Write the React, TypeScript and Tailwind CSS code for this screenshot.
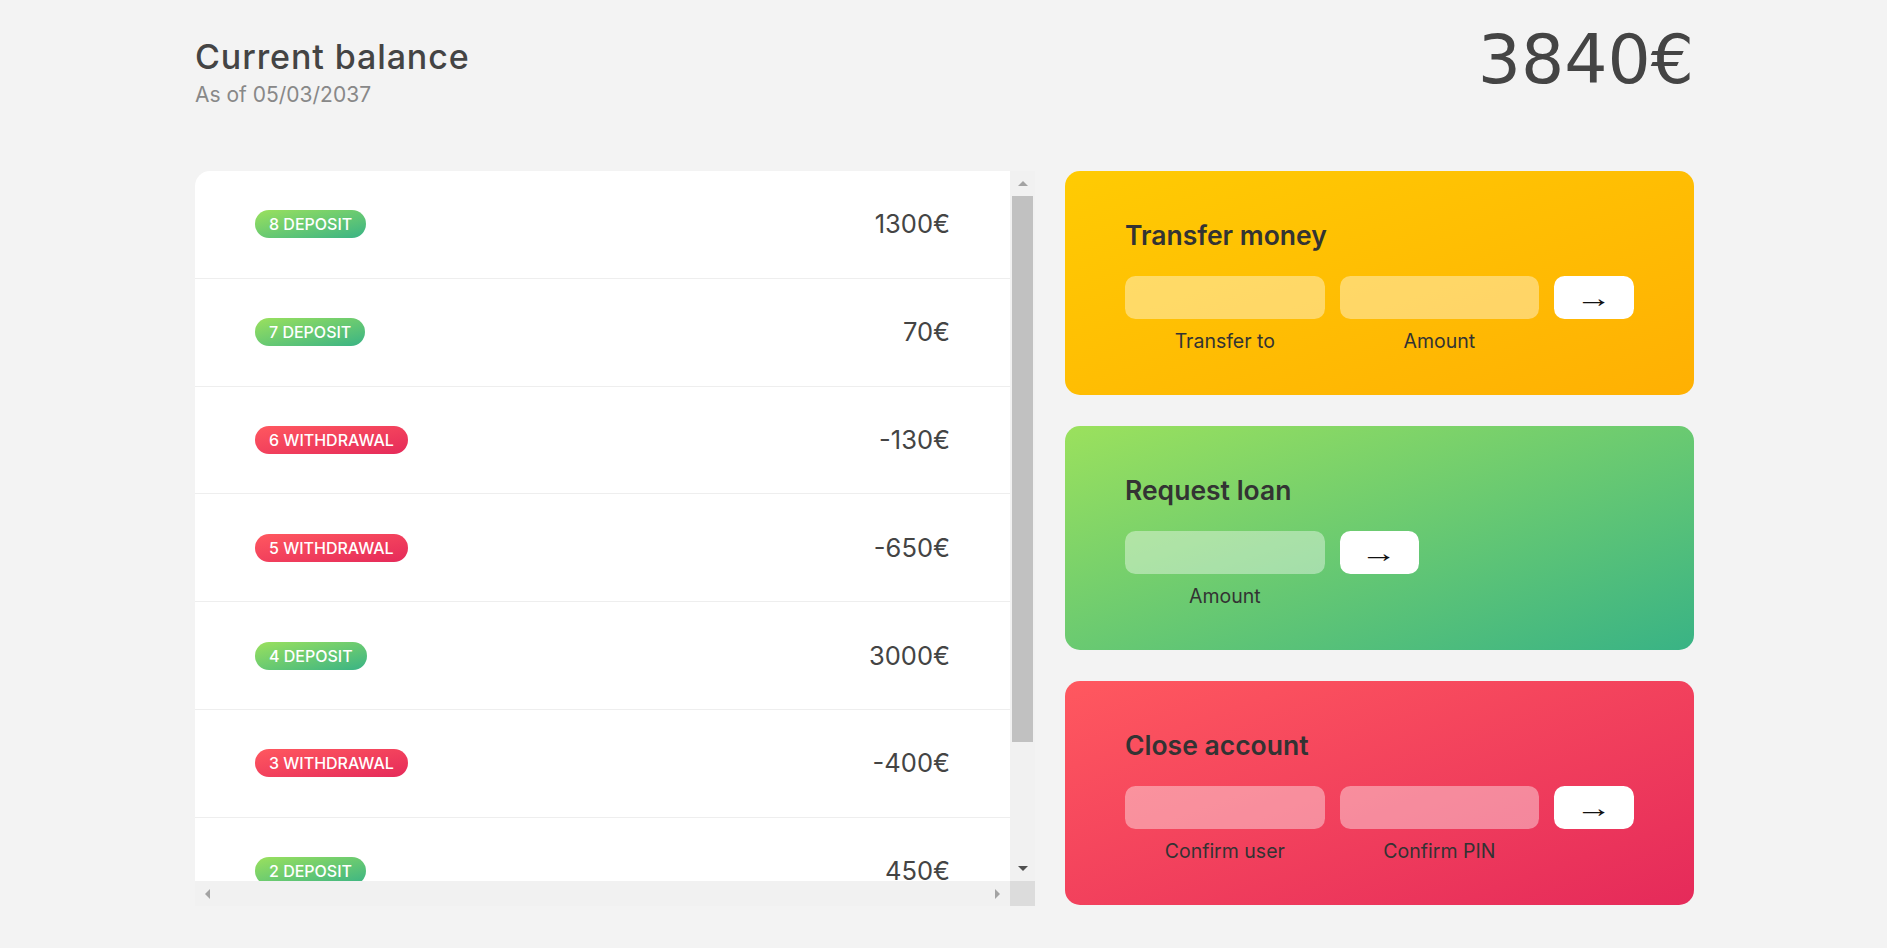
const movements = [
  { n: 8, type: "deposit", value: 1300 },
  { n: 7, type: "deposit", value: 70 },
  { n: 6, type: "withdrawal", value: -130 },
  { n: 5, type: "withdrawal", value: -650 },
  { n: 4, type: "deposit", value: 3000 },
  { n: 3, type: "withdrawal", value: -400 },
  { n: 2, type: "deposit", value: 450 },
  { n: 1, type: "deposit", value: 200 },
];

const Triangle = ({ dir, color }: { dir: "up" | "down" | "left" | "right"; color: string }) => {
  const points = {
    up: "0,5 5,0 10,5",
    down: "0,0 10,0 5,5",
    left: "5,0 5,10 0,5",
    right: "0,0 0,10 5,5",
  }[dir];
  const vertical = dir === "up" || dir === "down";
  return (
    <svg width={vertical ? 10 : 5} height={vertical ? 5 : 10} viewBox={vertical ? "0 0 10 5" : "0 0 5 10"}>
      <polygon points={points} fill={color} />
    </svg>
  );
};

const Operation = ({
  title,
  bg,
  inputs,
  loan,
}: {
  title: string;
  bg: string;
  inputs: string[];
  loan?: boolean;
}) => {
  const inputStyle = "h-[43px] w-full rounded-[10.5px] bg-white/40 border-none outline-none";
  const btnStyle =
    "h-[43px] w-full rounded-[10.5px] bg-white text-[26px] leading-none text-[#111] font-['Liberation_Sans',sans-serif] flex items-center justify-center";
  const labelStyle = "mt-[2px] text-center text-[19.5px] leading-[29px] text-[#333]";
  const arrow = <span className="inline-block scale-x-[1.4]">→</span>;

  return (
    <div className={`h-[224px] rounded-[15px] px-[60px] pt-[45px] ${bg}`}>
      <h2 className="text-[26.5px] leading-[38px] font-semibold text-[#333] mb-[22px]">{title}</h2>
      {loan ? (
        <div className="grid grid-cols-[2.5fr_1fr_2.5fr] gap-x-[15px] gap-y-[6px]">
          <input className={inputStyle} />
          <button className={btnStyle}>{arrow}</button>
          <div />
          <label className={labelStyle}>{inputs[0]}</label>
        </div>
      ) : (
        <div className="grid grid-cols-[2.5fr_2.5fr_1fr] gap-x-[15px] gap-y-[6px]">
          <input className={inputStyle} />
          <input className={inputStyle} />
          <button className={btnStyle}>{arrow}</button>
          <label className={labelStyle}>{inputs[0]}</label>
          <label className={labelStyle}>{inputs[1]}</label>
        </div>
      )}
    </div>
  );
};

export default function App() {
  return (
    <div className="min-h-screen bg-[#f3f3f3] text-[#444] font-[Inter,sans-serif]">
      <main className="ml-[195px] w-[1499px]">
        {/* balance */}
        <div className="flex justify-between items-start h-[171px]">
          <div className="pt-[36px]">
            <p className="text-[34px] leading-[41px] font-medium tracking-[0.9px]">Current balance</p>
            <p className="mt-[6px] text-[21px] leading-[24px] text-[#888]">
              As of <span>05/03/2037</span>
            </p>
          </div>
          <p className="pt-[26px] font-['DejaVu_Sans',sans-serif] text-[68px] leading-none">
            3840€
          </p>
        </div>

        <div className="grid grid-cols-[840px_629px] gap-x-[30px]">
          {/* movements */}
          <div className="flex flex-col h-[735px]">
            <div className="flex flex-1 min-h-0">
              <div className="flex-1 bg-white rounded-tl-[15px] overflow-hidden">
                {movements.map((m) => (
                  <div
                    key={m.n}
                    className="h-[107.8px] shrink-0 flex items-center justify-between px-[60px] border-b border-[#eee]"
                  >
                    <span
                      className={`rounded-full px-[14px] py-[2px] text-[16px] leading-[24px] font-medium uppercase text-white ${
                        m.type === "deposit"
                          ? "bg-[linear-gradient(to_top_left,#39b385,#9be15d)]"
                          : "bg-[linear-gradient(to_top_left,#e52a5a,#ff585f)]"
                      }`}
                    >
                      {m.n} {m.type}
                    </span>
                    <span className="text-[25.5px] leading-[38px] text-[#444]">{m.value}€</span>
                  </div>
                ))}
              </div>
              <div className="w-[25px] bg-[#f1f1f1] flex flex-col items-center">
                <div className="h-[25px] flex items-center justify-center">
                  <Triangle dir="up" color="#a3a3a3" />
                </div>
                <div className="w-[21px] h-[546px] bg-[#c1c1c1]" />
                <div className="flex-1" />
                <div className="h-[25px] flex items-center justify-center">
                  <Triangle dir="down" color="#505050" />
                </div>
              </div>
            </div>
            <div className="flex h-[25px]">
              <div className="flex-1 bg-[#f1f1f1] flex items-center justify-between px-[10px]">
                <Triangle dir="left" color="#a3a3a3" />
                <Triangle dir="right" color="#a3a3a3" />
              </div>
              <div className="w-[25px] bg-[#dcdcdc]" />
            </div>
          </div>

          {/* operations */}
          <div className="flex flex-col gap-[31px]">
            <Operation
              title="Transfer money"
              bg="bg-[linear-gradient(to_top_left,#ffb003,#ffcb03)]"
              inputs={["Transfer to", "Amount"]}
            />
            <Operation
              title="Request loan"
              bg="bg-[linear-gradient(to_top_left,#39b385,#9be15d)]"
              inputs={["Amount"]}
              loan
            />
            <Operation
              title="Close account"
              bg="bg-[linear-gradient(to_top_left,#e52a5a,#ff585f)]"
              inputs={["Confirm user", "Confirm PIN"]}
            />
          </div>
        </div>
      </main>
    </div>
  );
}
